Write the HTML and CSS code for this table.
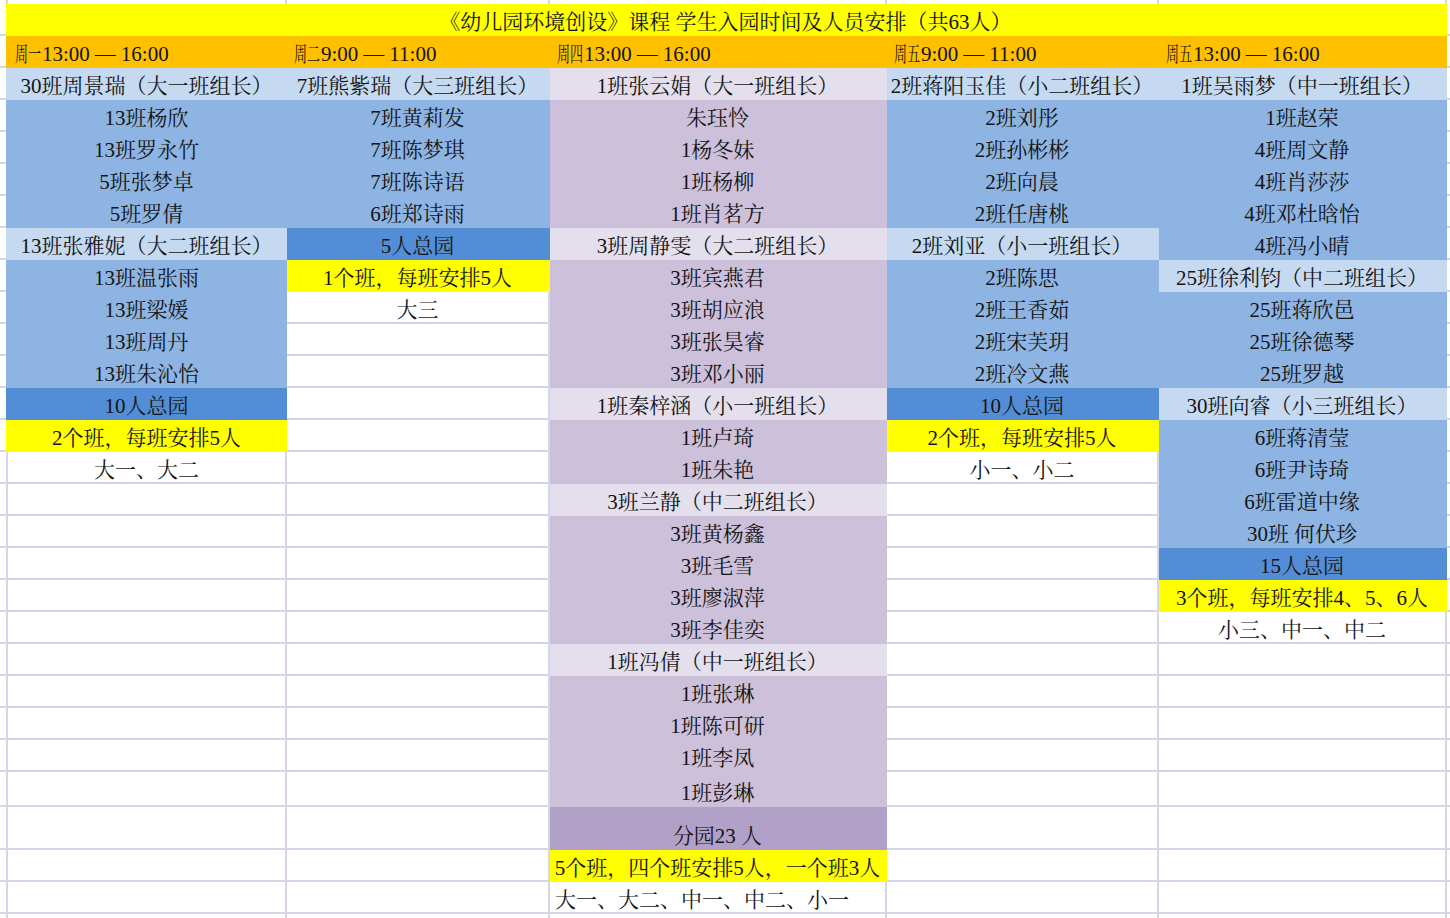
FILE: index.html
```html
<!DOCTYPE html>
<html lang="zh-CN">
<head>
    <meta charset="UTF-8">
    <title>幼儿园环境创设 学生入园时间及人员安排</title>
    <link rel="stylesheet" href="styles.css">
</head>
<body>

<div class="sheet">

    <!-- top sliver of the previous row -->
    <div class="row top">
        <div class="gut"></div><div class="a"></div><div></div><div></div><div></div><div></div><div class="end"></div>
    </div>

    <div class="row">
        <div class="gut"></div>
        <div class="title yl">《幼儿园环境创设》课程 学生入园时间及人员安排（共63人）</div>
        <div class="end"></div>
    </div>

    <div class="row head">
        <div class="gut"></div>
        <div class="a or"><span class="day">周一</span>13:00<span class="dash">—</span>16:00</div>
        <div class="or"><span class="day">周二</span>9:00<span class="dash">—</span>11:00</div>
        <div class="or"><span class="day">周四</span>13:00<span class="dash">—</span>16:00</div>
        <div class="or"><span class="day">周五</span>9:00<span class="dash">—</span>11:00</div>
        <div class="or"><span class="day">周五</span>13:00<span class="dash">—</span>16:00</div>
        <div class="end"></div>
    </div>

    <div class="row">
        <div class="gut"></div>
        <div class="a lb">30班周景瑞（大一班组长）</div>
        <div class="lb">7班熊紫瑞（大三班组长）</div>
        <div class="lp">1班张云娟（大一班组长）</div>
        <div class="lb">2班蒋阳玉佳（小二班组长）</div>
        <div class="lb">1班吴雨梦（中一班组长）</div>
        <div class="end"></div>
    </div>
    <div class="row">
        <div class="gut"></div>
        <div class="a mb">13班杨欣</div>
        <div class="mb">7班黄莉发</div>
        <div class="pp">朱珏怜</div>
        <div class="mb">2班刘彤</div>
        <div class="mb">1班赵荣</div>
        <div class="end"></div>
    </div>
    <div class="row">
        <div class="gut"></div>
        <div class="a mb">13班罗永竹</div>
        <div class="mb">7班陈梦琪</div>
        <div class="pp">1杨冬妹</div>
        <div class="mb">2班孙彬彬</div>
        <div class="mb">4班周文静</div>
        <div class="end"></div>
    </div>
    <div class="row">
        <div class="gut"></div>
        <div class="a mb">5班张梦卓</div>
        <div class="mb">7班陈诗语</div>
        <div class="pp">1班杨柳</div>
        <div class="mb">2班向晨</div>
        <div class="mb">4班肖莎莎</div>
        <div class="end"></div>
    </div>
    <div class="row">
        <div class="gut"></div>
        <div class="a mb">5班罗倩</div>
        <div class="mb">6班郑诗雨</div>
        <div class="pp">1班肖茗方</div>
        <div class="mb">2班任唐桃</div>
        <div class="mb">4班邓杜晗怡</div>
        <div class="end"></div>
    </div>
    <div class="row">
        <div class="gut"></div>
        <div class="a lb">13班张雅妮（大二班组长）</div>
        <div class="db">5人总园</div>
        <div class="lp">3班周静雯（大二班组长）</div>
        <div class="lb">2班刘亚（小一班组长）</div>
        <div class="mb">4班冯小晴</div>
        <div class="end"></div>
    </div>
    <div class="row">
        <div class="gut"></div>
        <div class="a mb">13班温张雨</div>
        <div class="yl">1个班，每班安排5人</div>
        <div class="pp">3班宾燕君</div>
        <div class="mb">2班陈思</div>
        <div class="lb">25班徐利钧（中二班组长）</div>
        <div class="end"></div>
    </div>
    <div class="row">
        <div class="gut"></div>
        <div class="a mb">13班梁媛</div>
        <div>大三</div>
        <div class="pp">3班胡应浪</div>
        <div class="mb">2班王香茹</div>
        <div class="mb">25班蒋欣邑</div>
        <div class="end"></div>
    </div>
    <div class="row">
        <div class="gut"></div>
        <div class="a mb">13班周丹</div>
        <div></div>
        <div class="pp">3班张昊睿</div>
        <div class="mb">2班宋芙玥</div>
        <div class="mb">25班徐德琴</div>
        <div class="end"></div>
    </div>
    <div class="row">
        <div class="gut"></div>
        <div class="a mb">13班朱沁怡</div>
        <div></div>
        <div class="pp">3班邓小丽</div>
        <div class="mb">2班冷文燕</div>
        <div class="mb">25班罗越</div>
        <div class="end"></div>
    </div>
    <div class="row">
        <div class="gut"></div>
        <div class="a db">10人总园</div>
        <div></div>
        <div class="lp">1班秦梓涵（小一班组长）</div>
        <div class="db">10人总园</div>
        <div class="lb">30班向睿（小三班组长）</div>
        <div class="end"></div>
    </div>
    <div class="row">
        <div class="gut"></div>
        <div class="a yl">2个班，每班安排5人</div>
        <div></div>
        <div class="pp">1班卢琦</div>
        <div class="yl">2个班，每班安排5人</div>
        <div class="mb">6班蒋清莹</div>
        <div class="end"></div>
    </div>
    <div class="row">
        <div class="gut"></div>
        <div class="a">大一、大二</div>
        <div></div>
        <div class="pp">1班朱艳</div>
        <div>小一、小二</div>
        <div class="mb">6班尹诗琦</div>
        <div class="end"></div>
    </div>
    <div class="row">
        <div class="gut"></div>
        <div class="a"></div>
        <div></div>
        <div class="lp">3班兰静（中二班组长）</div>
        <div></div>
        <div class="mb">6班雷道中缘</div>
        <div class="end"></div>
    </div>
    <div class="row">
        <div class="gut"></div>
        <div class="a"></div>
        <div></div>
        <div class="pp">3班黄杨鑫</div>
        <div></div>
        <div class="mb">30班 何伏珍</div>
        <div class="end"></div>
    </div>
    <div class="row">
        <div class="gut"></div>
        <div class="a"></div>
        <div></div>
        <div class="pp">3班毛雪</div>
        <div></div>
        <div class="db">15人总园</div>
        <div class="end"></div>
    </div>
    <div class="row">
        <div class="gut"></div>
        <div class="a"></div>
        <div></div>
        <div class="pp">3班廖淑萍</div>
        <div></div>
        <div class="yl">3个班，每班安排4、5、6人</div>
        <div class="end"></div>
    </div>
    <div class="row">
        <div class="gut"></div>
        <div class="a"></div>
        <div></div>
        <div class="pp">3班李佳奕</div>
        <div></div>
        <div>小三、中一、中二</div>
        <div class="end"></div>
    </div>
    <div class="row">
        <div class="gut"></div>
        <div class="a"></div>
        <div></div>
        <div class="lp">1班冯倩（中一班组长）</div>
        <div></div>
        <div></div>
        <div class="end"></div>
    </div>
    <div class="row">
        <div class="gut"></div>
        <div class="a"></div>
        <div></div>
        <div class="pp">1班张琳</div>
        <div></div>
        <div></div>
        <div class="end"></div>
    </div>
    <div class="row">
        <div class="gut"></div>
        <div class="a"></div>
        <div></div>
        <div class="pp">1班陈可研</div>
        <div></div>
        <div></div>
        <div class="end"></div>
    </div>
    <div class="row">
        <div class="gut"></div>
        <div class="a"></div>
        <div></div>
        <div class="pp">1班李凤</div>
        <div></div>
        <div></div>
        <div class="end"></div>
    </div>
    <div class="row tall">
        <div class="gut"></div>
        <div class="a"></div>
        <div></div>
        <div class="pp">1班彭琳</div>
        <div></div>
        <div></div>
        <div class="end"></div>
    </div>
    <div class="row taller">
        <div class="gut"></div>
        <div class="a"></div>
        <div></div>
        <div class="dp">分园23 人</div>
        <div></div>
        <div></div>
        <div class="end"></div>
    </div>
    <div class="row">
        <div class="gut"></div>
        <div class="a"></div>
        <div></div>
        <div class="yl">5个班，四个班安排5人，一个班3人</div>
        <div></div>
        <div></div>
        <div class="end"></div>
    </div>
    <div class="row">
        <div class="gut"></div>
        <div class="a"></div>
        <div></div>
        <div class="left">大一、大二、中一、中二、小一</div>
        <div></div>
        <div></div>
        <div class="end"></div>
    </div>
    <div class="row">
        <div class="gut"></div><div class="a"></div><div></div><div></div><div></div><div></div><div class="end"></div>
    </div>

</div>

</body>
</html>
```

FILE: styles.css
```css
body {
    margin: 0;
    background: #fff;
    font-family: "Liberation Serif", "Noto Serif CJK SC", "Noto Sans CJK SC", serif;
    font-size: 21px;
    color: #141414;
}

.sheet {
    width: 1450px;
    height: 918px;
    overflow: hidden;
}

.row {
    display: grid;
    grid-template-columns: 6px 281px 263px 337px 272px 288px 3px;
    height: 32px;
}

.row > div {
    box-sizing: border-box;
    border-right: 2px solid #d4d7e7;
    border-bottom: 2px solid #d4d7e7;
    display: flex;
    align-items: flex-end;
    justify-content: center;
    padding-bottom: 0;
    line-height: 24px;
    white-space: nowrap;
    overflow: visible;
}

.row > .gut {
    border-right: none;
}

.row > .a {
    border-left: 2px solid #d4d7e7;
}

.row > .end {
    border-right: none;
}

.top {
    height: 4px;
}

.top > div {
    border-bottom: none !important;
}

.tall {
    height: 35px;
}

.taller {
    height: 43px;
}

.title {
    grid-column: span 5;
}

/* header row */
.head > div {
    justify-content: flex-start;
    padding-left: 7px;
}

.head > .gut {
    padding-left: 0;
}

.day {
    display: inline-block;
    transform: scaleX(0.62);
    transform-origin: left center;
    margin-right: -15px;
}

.dash {
    padding: 0 5px;
}

.left {
    justify-content: flex-start !important;
    padding-left: 5px;
}

/* fills */
.row > .yl { background: #ffff00; border-color: transparent; }
.row > .or { background: #ffc000; border-color: transparent; }
.row > .lb { background: #c5d9f1; border-color: transparent; }
.row > .mb { background: #8db4e2; border-color: transparent; }
.row > .db { background: #538dd5; border-color: transparent; }
.row > .lp { background: #e4dfec; border-color: transparent; }
.row > .pp { background: #ccc0da; border-color: transparent; }
.row > .dp { background: #b1a0c7; border-color: transparent; }
```
